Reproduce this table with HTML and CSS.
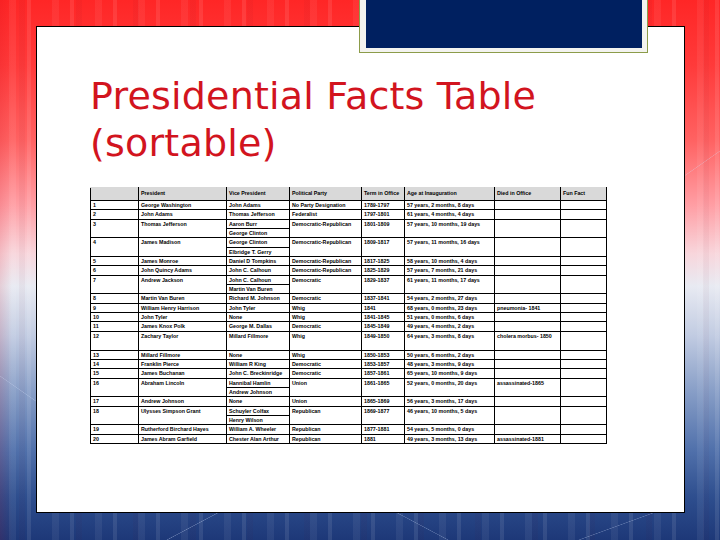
FILE: index.html
```html
<!DOCTYPE html>
<html>
<head>
<meta charset="utf-8">
<title>Presidential Facts Table</title>
<link rel="stylesheet" href="styles.css">
</head>
<body>
<div class="slide">
  <div class="panel">
    <h1 class="title">Presidential Facts Table<br>(sortable)</h1>
    <table class="facts">
      <colgroup>
        <col class="c-num"><col class="c-pres"><col class="c-vp"><col class="c-party"><col class="c-term"><col class="c-age"><col class="c-died"><col class="c-fun">
      </colgroup>
      <thead>
        <tr><th></th><th>President</th><th>Vice President</th><th>Political Party</th><th>Term in Office</th><th>Age at Inauguration</th><th>Died in Office</th><th>Fun Fact</th></tr>
      </thead>
      <tbody>
        <tr><td>1</td><td>George Washington</td><td>John Adams</td><td>No Party Designation</td><td>1789-1797</td><td>57 years, 2 months, 8 days</td><td></td><td></td></tr>
        <tr><td>2</td><td>John Adams</td><td>Thomas Jefferson</td><td>Federalist</td><td>1797-1801</td><td>61 years, 4 months, 4 days</td><td></td><td></td></tr>
        <tr><td rowspan="2">3</td><td rowspan="2">Thomas Jefferson</td><td>Aaron Burr</td><td rowspan="2">Democratic-Republican</td><td rowspan="2">1801-1809</td><td rowspan="2">57 years, 10 months, 19 days</td><td rowspan="2"></td><td rowspan="2"></td></tr>
        <tr><td>George Clinton</td></tr>
        <tr><td rowspan="2">4</td><td rowspan="2">James Madison</td><td>George Clinton</td><td rowspan="2">Democratic-Republican</td><td rowspan="2">1809-1817</td><td rowspan="2">57 years, 11 months, 16 days</td><td rowspan="2"></td><td rowspan="2"></td></tr>
        <tr><td>Elbridge T. Gerry</td></tr>
        <tr><td>5</td><td>James Monroe</td><td>Daniel D Tompkins</td><td>Democratic-Republican</td><td>1817-1825</td><td>58 years, 10 months, 4 days</td><td></td><td></td></tr>
        <tr><td>6</td><td>John Quincy Adams</td><td>John C. Calhoun</td><td>Democratic-Republican</td><td>1825-1829</td><td>57 years, 7 months, 21 days</td><td></td><td></td></tr>
        <tr><td rowspan="2">7</td><td rowspan="2">Andrew Jackson</td><td>John C. Calhoun</td><td rowspan="2">Democratic</td><td rowspan="2">1829-1837</td><td rowspan="2">61 years, 11 months, 17 days</td><td rowspan="2"></td><td rowspan="2"></td></tr>
        <tr><td>Martin Van Buren</td></tr>
        <tr><td>8</td><td>Martin Van Buren</td><td>Richard M. Johnson</td><td>Democratic</td><td>1837-1841</td><td>54 years, 2 months, 27 days</td><td></td><td></td></tr>
        <tr><td>9</td><td>William Henry Harrison</td><td>John Tyler</td><td>Whig</td><td>1841</td><td>68 years, 0 months, 23 days</td><td>pneumonia- 1841</td><td></td></tr>
        <tr><td>10</td><td>John Tyler</td><td>None</td><td>Whig</td><td>1841-1845</td><td>51 years, 0 months, 6 days</td><td></td><td></td></tr>
        <tr><td>11</td><td>James Knox Polk</td><td>George M. Dallas</td><td>Democratic</td><td>1845-1849</td><td>49 years, 4 months, 2 days</td><td></td><td></td></tr>
        <tr><td rowspan="2">12</td><td rowspan="2">Zachary Taylor</td><td rowspan="2">Millard Fillmore</td><td rowspan="2">Whig</td><td rowspan="2">1849-1850</td><td rowspan="2">64 years, 3 months, 8 days</td><td rowspan="2">cholera morbus- 1850</td><td rowspan="2"></td></tr>
        <tr></tr>
        <tr><td>13</td><td>Millard Fillmore</td><td>None</td><td>Whig</td><td>1850-1853</td><td>50 years, 6 months, 2 days</td><td></td><td></td></tr>
        <tr><td>14</td><td>Franklin Pierce</td><td>William R King</td><td>Democratic</td><td>1853-1857</td><td>48 years, 3 months, 9 days</td><td></td><td></td></tr>
        <tr><td>15</td><td>James Buchanan</td><td>John C. Breckinridge</td><td>Democratic</td><td>1857-1861</td><td>65 years, 10 months, 9 days</td><td></td><td></td></tr>
        <tr><td rowspan="2">16</td><td rowspan="2">Abraham Lincoln</td><td>Hannibal Hamlin</td><td rowspan="2">Union</td><td rowspan="2">1861-1865</td><td rowspan="2">52 years, 0 months, 20 days</td><td rowspan="2">assassinated-1865</td><td rowspan="2"></td></tr>
        <tr><td>Andrew Johnson</td></tr>
        <tr><td>17</td><td>Andrew Johnson</td><td>None</td><td>Union</td><td>1865-1869</td><td>56 years, 3 months, 17 days</td><td></td><td></td></tr>
        <tr><td rowspan="2">18</td><td rowspan="2">Ulysses Simpson Grant</td><td>Schuyler Colfax</td><td rowspan="2">Republican</td><td rowspan="2">1869-1877</td><td rowspan="2">46 years, 10 months, 5 days</td><td rowspan="2"></td><td rowspan="2"></td></tr>
        <tr><td>Henry Wilson</td></tr>
        <tr><td>19</td><td>Rutherford Birchard Hayes</td><td>William A. Wheeler</td><td>Republican</td><td>1877-1881</td><td>54 years, 5 months, 0 days</td><td></td><td></td></tr>
        <tr><td>20</td><td>James Abram Garfield</td><td>Chester Alan Arthur</td><td>Republican</td><td>1881</td><td>49 years, 3 months, 13 days</td><td>assassinated-1881</td><td></td></tr>
      </tbody>
    </table>
  </div>
  <div class="tab"><div class="tab-fill"></div></div>
</div>
</body>
</html>
```
FILE: styles.css
```css
html, body {
  margin: 0;
  padding: 0;
}

.slide {
  position: relative;
  width: 720px;
  height: 540px;
  overflow: hidden;
  padding-top: 26px;
  box-sizing: border-box;
  background:
    linear-gradient(152deg, transparent calc(50% - 0.6px), rgba(200, 215, 245, 0.4) 50%, transparent calc(50% + 0.6px)) 150px 500px / 90px 50px no-repeat,
    linear-gradient(28deg, transparent calc(50% - 0.6px), rgba(200, 215, 245, 0.35) 50%, transparent calc(50% + 0.6px)) 360px 505px / 120px 40px no-repeat,
    linear-gradient(160deg, transparent calc(50% - 0.6px), rgba(200, 215, 245, 0.35) 50%, transparent calc(50% + 0.6px)) 560px 505px / 120px 40px no-repeat,
    linear-gradient(35deg, transparent calc(50% - 0.6px), rgba(210, 220, 245, 0.35) 50%, transparent calc(50% + 0.6px)) 0 330px / 40px 120px no-repeat,
    linear-gradient(145deg, transparent calc(50% - 0.6px), rgba(210, 220, 245, 0.35) 50%, transparent calc(50% + 0.6px)) 680px 120px / 40px 90px no-repeat,
    linear-gradient(90deg, rgba(200, 0, 20, 0.12) 0, rgba(200, 0, 20, 0) 12px),
    repeating-linear-gradient(90deg, rgba(255, 255, 255, 0) 0 9px, rgba(255, 255, 255, 0.06) 9px 16px, rgba(255, 255, 255, 0) 16px 27px, rgba(255, 255, 255, 0.09) 27px 31px, rgba(255, 255, 255, 0) 31px 43px),
    repeating-linear-gradient(90deg, rgba(0, 0, 0, 0) 0 19px, rgba(90, 0, 30, 0.04) 19px 25px, rgba(0, 0, 0, 0) 25px 57px),
    linear-gradient(180deg, #ff2626 0%, #ff3a3a 12%, #ff6262 26%, #ff9ea4 38%, #f8d6dc 47%, #e8eaf2 53%, #c2cce2 62%, #8aa0c8 72%, #5272ac 83%, #2e4e8e 92%, #1d3878 100%);
}

.panel {
  width: 649px;
  height: 487px;
  margin-left: 36px;
  box-sizing: border-box;
  border: 1px solid #000;
  background: #fff;
  padding: 46px 0 0 53px;
}

.title {
  margin: 0;
  font-family: "DejaVu Sans", "Liberation Sans", sans-serif;
  font-weight: normal;
  font-size: 38px;
  line-height: 47px;
  color: #d2141e;
  letter-spacing: 0.2px;
}

.facts {
  margin-top: 20px;
  border-collapse: collapse;
  table-layout: fixed;
  width: 516px;
  font-family: "Liberation Sans", Arial, sans-serif;
  font-size: 5.3px;
  font-weight: bold;
  color: #000;
}

.c-num { width: 48px; }
.c-pres { width: 88px; }
.c-vp { width: 63px; }
.c-party { width: 72px; }
.c-term { width: 43px; }
.c-age { width: 90px; }
.c-died { width: 66px; }
.c-fun { width: 46px; }

.facts th,
.facts td {
  border: 1px solid #000;
  padding: 1px 0 0 2px;
  vertical-align: top;
  text-align: left;
  font-weight: bold;
  line-height: 6px;
  white-space: nowrap;
  overflow: hidden;
}

.facts tbody tr {
  height: 9.35px;
}

.facts thead tr {
  height: 13px;
}

.facts th {
  background: #d9d9d9;
  border-top-color: #d9d9d9;
  padding-top: 2px;
}

.tab {
  position: absolute;
  left: 359px;
  top: -1px;
  width: 289px;
  height: 54px;
  box-sizing: border-box;
  border: 1px solid #8c9c4a;
  background: #f3f3ef;
  padding: 0 5px 4px 6px;
}

.tab-fill {
  height: 100%;
  background: #002060;
}
```
